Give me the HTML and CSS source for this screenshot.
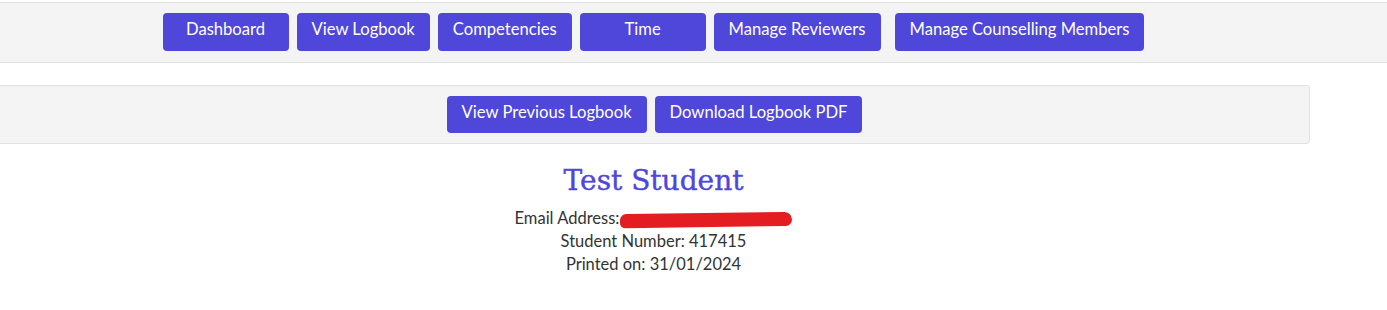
FILE: index.html
```html
<!DOCTYPE html>
<html lang="en">
<head>
  <meta charset="UTF-8" />
  <meta name="viewport" content="width=device-width, initial-scale=1.0"/>
  <title>Logbook</title>
  <link rel="stylesheet" href="styles.css">
</head>
<body>
  <nav class="topnav">
    <div class="nav-inner">
      <button class="btn">Dashboard</button>
      <button class="btn">View Logbook</button>
      <button class="btn">Competencies</button>
      <button class="btn">Time</button>
      <button class="btn">Manage Reviewers</button>
      <button class="btn btn-wide-gap">Manage Counselling Members</button>
    </div>
  </nav>

  <div class="toolbar">
    <button class="btn">View Previous Logbook</button>
    <button class="btn">Download Logbook PDF</button>
  </div>

  <section class="student">
    <h1>Test Student</h1>
    <p>Email Address:<span class="redacted"></span></p>
    <p>Student Number: 417415</p>
    <p>Printed on: 31/01/2024</p>
  </section>
</body>
</html>
```

FILE: styles.css
```css
:root {
  --primary: #4f46da;
  --bar: #f4f4f4;
  --line: #e2e2e2;
  --text: #333;
}

body {
  margin: 0;
  font-family: 'Lato', 'Noto Sans', sans-serif;
  color: var(--text);
  background: #fff;
}

.topnav {
  margin-top: 2px;
  background: var(--bar);
  border-top: 1px solid var(--line);
  border-bottom: 1px solid var(--line);
}

.nav-inner {
  width: 1307px;
  display: flex;
  justify-content: center;
  gap: 8px;
  padding: 10px 0 11px;
}

.btn {
  font-family: inherit;
  font-size: 16.6px;
  color: #fff;
  background: var(--primary);
  border: none;
  border-radius: 4px;
  height: 38px;
  min-width: 126px;
  padding: 0 15px 6px;
  cursor: pointer;
}

.btn-wide-gap {
  margin-left: 6px;
}

.toolbar {
  width: 1309px;
  margin-top: 22px;
  background: var(--bar);
  border: 1px solid var(--line);
  border-left: none;
  border-radius: 0 4px 4px 0;
  display: flex;
  justify-content: center;
  gap: 8px;
  padding: 10px 0;
}

.toolbar .btn {
  height: 37px;
}

.student {
  width: 1307px;
  text-align: center;
  padding-top: 17px;
}

.student h1 {
  margin: 0 0 6px;
  font-family: 'DejaVu Serif', 'Liberation Serif', serif;
  font-weight: normal;
  font-size: 28px;
  color: var(--primary);
  line-height: 40px;
  -webkit-text-stroke: 0.4px var(--primary);
}

.student p {
  margin: 0;
  font-size: 16.5px;
  line-height: 23px;
}

.redacted {
  display: inline-block;
  width: 172px;
  height: 14px;
  margin-left: 1px;
  vertical-align: -3px;
  background: #e31d22;
  border-radius: 8px 10px 8px 6px;
  transform: rotate(-0.8deg);
}
```
